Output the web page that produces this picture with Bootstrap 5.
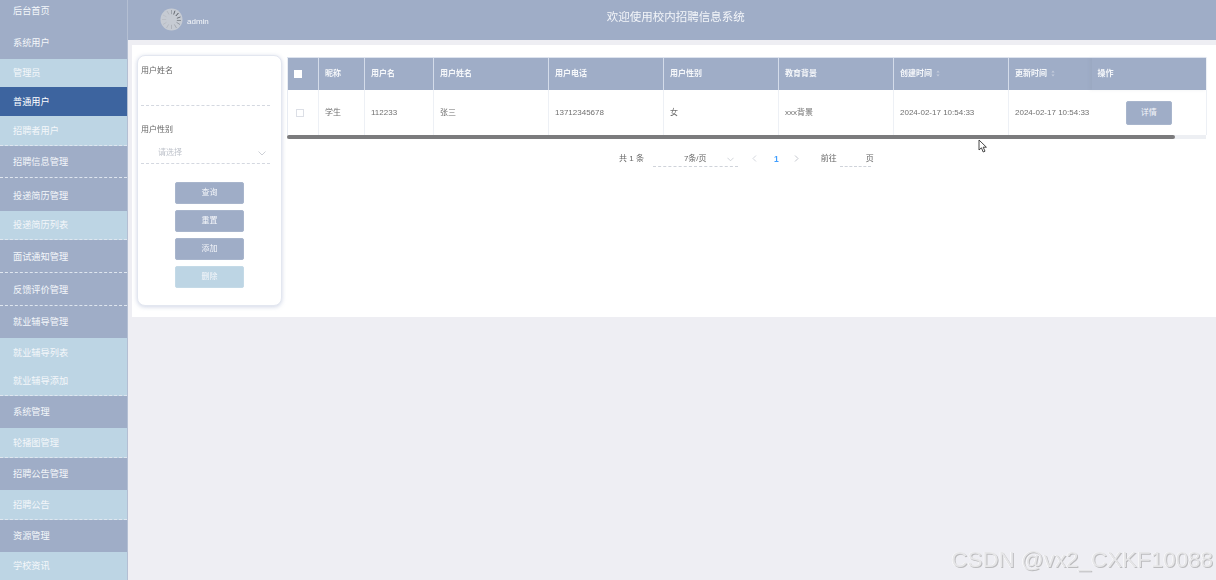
<!DOCTYPE html>
<html lang="zh">
<head>
<meta charset="utf-8">
<title>校内招聘信息系统</title>
<link href="https://cdn.jsdelivr.net/npm/bootstrap@5.3.0/dist/css/bootstrap.min.css" rel="stylesheet">
<style>
html,body{height:580px;overflow:hidden}
body{background:#eeeef3;font-family:"Liberation Sans","Noto Sans CJK SC",sans-serif;color:#666;font-size:8px;position:relative}
.shell{height:580px;filter:blur(.4px)}
.side{width:128px;flex:none;background:#bdd5e4;border-right:1px solid #b4bfd3;overflow:hidden}
.side .nav-link{color:#f4f7fa;font-size:9.2px;padding:2px 0 0 13px;display:flex;align-items:center;line-height:1}
.i-main{background:#9fadc7}
.i-sub{background:#bdd5e4}
.side .nav-link.i-on{background:#3d649f;color:#fff}
.dash{border-bottom:1px dashed #dfe6ef}
.h27{height:27px;padding-bottom:5px!important}.h28{height:28px}.h29{height:29px}.h30{height:30px}.h32{height:32px}.h33{height:33px}
.side .nav-link.h33{padding-top:4px}
.top{height:40px;background:#9fadc7;color:#fff;padding-left:32px}
.who{font-size:8px;margin-left:4px;color:#f5f7fa;margin-top:3px}
.ttl{font-size:11.5px;margin-left:398px;margin-top:-5px;color:#f3f5f9}
.avatar{width:23px;height:23px;margin-top:-1px}
.panel{height:272px;background:#fff;margin:5px 0 0 4px;padding:10px 10px 0 5px;gap:5px}
.fcard{width:145px;height:251px;flex:none;border:1px solid #e3e7f0;border-radius:8px;box-shadow:0 1px 4px rgba(150,165,200,.45);padding:9px 3px 0;background:#fff}
.flabel{font-size:8px;color:#666;line-height:11px}
.fline{border-bottom:1px dashed #d4d8e0;font-size:8px;color:#bfc3cb;padding-left:17px}
.fline1{height:24px;margin:6px 8px 18px 0}
.fline2{height:21px;margin:8px 8px 18px 0}
.actbtn{width:69px;height:22px;border-radius:2px;border:1px solid #a8b5cc;background:#9fadc7;color:#f4f6fa;font-size:8px;padding:0;line-height:1}
.actbtn.pale{background:#bdd5e4;border-color:#c4dae7}
.btnstack{gap:6px}
.tblwrap{width:919px;margin-top:2px}
.gtable{table-layout:fixed;width:919px;margin:0;font-size:8px;--bs-table-bg:transparent;border-collapse:collapse}
.gtable th{height:32px;background:#9fadc7;color:#f5f7fa;font-weight:700;font-size:8px;padding:0 6px;border:0;border-left:1px solid #d4dcea;vertical-align:middle;white-space:nowrap;border-top:1px solid #dde3ee}
.gtable td{height:45px;padding:2px 6px 0;border:0;border-left:1px solid #edf0f5;color:#707070;vertical-align:middle;white-space:nowrap;overflow:hidden}
.gtable th:first-child{padding:0 0 0 6px;border-left:1px solid #e8ecf3}
.gtable td:first-child{padding:2px 0 0 8px;border-left:1px solid #e8ecf3}
.gtable .fixc{box-shadow:-2px 0 3px rgba(120,130,150,.12);border-left:0;border-right:1px solid #edf0f5;padding-left:6px}
.gtable td.fixc{text-align:center}
.chk{width:8px;height:8px;display:block;border:1px solid #dcdfe6;background:#fff}
th .chk{border:0}
.sorter{display:inline-block;width:4px;height:7px;margin-left:4px;vertical-align:-1px}
.detbtn{width:46px;height:24px;font-size:8px;background:#9fadc7;border:1px solid #a8b5cc;border-radius:2px;color:#f4f6fa;padding:0}
.track{height:4px;background:#edeff3}
.thumb{width:888px;height:4px;background:#7b7b7d;border-radius:2px}
.pager{margin-top:14px;height:12px;font-size:8px;color:#666;padding-left:332px}
.psel{width:85px;height:14px;margin-left:9px;border-bottom:1px dashed #cfd3da;padding-left:31px;padding-right:4px;position:relative}
.parrow{margin-left:14px;margin-top:2px}
.pnum{color:#409eff;font-weight:700;margin:0 15px 0 17px;font-size:8.5px}
.pgo{width:31px;height:14px;border-bottom:1px dashed #cfd3da;margin:0 -5px 0 3px}
.pnext{margin-right:22px;margin-top:2px}
.mark2{position:absolute;right:3px;bottom:9px;font-family:"Liberation Sans",sans-serif;font-size:22.4px;color:#e6e6e8;line-height:1;text-shadow:1px 1px 0 #bcbcbe,-.5px -.5px 0 #fff}
.cursor{position:absolute;left:978px;top:139px;width:10px;height:14px}
</style>
</head>
<body>
<div class="shell d-flex">
  <nav class="side nav flex-column flex-nowrap">
    <a class="nav-link i-main h27" href="#">后台首页</a>
    <a class="nav-link i-main h32" href="#">系统用户</a>
    <a class="nav-link i-sub h28" href="#">管理员</a>
    <a class="nav-link i-on h29" href="#">普通用户</a>
    <a class="nav-link i-sub h30 dash" href="#">招聘者用户</a>
    <a class="nav-link i-main h32 dash" href="#">招聘信息管理</a>
    <a class="nav-link i-main h33" href="#">投递简历管理</a>
    <a class="nav-link i-sub h29 dash" href="#">投递简历列表</a>
    <a class="nav-link i-main h33 dash" href="#">面试通知管理</a>
    <a class="nav-link i-main h33 dash" href="#">反馈评价管理</a>
    <a class="nav-link i-main h32" href="#">就业辅导管理</a>
    <a class="nav-link i-sub h29" href="#">就业辅导列表</a>
    <a class="nav-link i-sub h29 dash" href="#">就业辅导添加</a>
    <a class="nav-link i-main h32" href="#">系统管理</a>
    <a class="nav-link i-sub h30 dash" href="#">轮播图管理</a>
    <a class="nav-link i-main h32" href="#">招聘公告管理</a>
    <a class="nav-link i-sub h30 dash" href="#">招聘公告</a>
    <a class="nav-link i-main h32" href="#">资源管理</a>
    <a class="nav-link i-sub h28" href="#">学校资讯</a>
  </nav>
  <main class="flex-grow-1">
    <header class="top d-flex align-items-center">
      <svg class="avatar" viewBox="0 0 24 24" aria-hidden="true">
        <circle cx="12" cy="12" r="11.5" fill="#c6cbd3"/>
        <g stroke-width="1" stroke-linecap="round">
          <path d="M12 2.5V6" stroke="#9ba1aa"/>
          <path d="M15.5 3.2L14.4 6.4" stroke="#5f646c"/>
          <path d="M19 5.5L16.8 8" stroke="#4b5058"/>
          <path d="M21 9.5L18 10.6" stroke="#6a6f77"/>
          <path d="M21.5 13H18" stroke="#858a92"/>
          <path d="M20.5 17L17.6 15.2" stroke="#9298a0"/>
          <path d="M17 20.5L15.2 17.5" stroke="#a2a7af"/>
          <path d="M12 21.5V18" stroke="#adb2b9"/>
          <path d="M7 20.5L8.8 17.5" stroke="#b4b8bf"/>
          <path d="M3.5 17L6.4 15.2" stroke="#b8bcc3"/>
          <path d="M2.5 12H6" stroke="#babec5"/>
          <path d="M3.5 7.5L6.4 9" stroke="#bcc0c7"/>
          <path d="M7.5 3.5L9.2 6.4" stroke="#b4b8bf"/>
        </g>
      </svg>
      <span class="who">admin</span>
      <span class="ttl">欢迎使用校内招聘信息系统</span>
    </header>
    <section class="panel d-flex align-items-start">
      <form class="fcard">
        <div class="flabel">用户姓名</div>
        <div class="fline fline1"></div>
        <div class="flabel">用户性别</div>
        <div class="fline fline2 d-flex justify-content-between align-items-center">
          <span>请选择</span>
          <svg width="8" height="5" viewBox="0 0 8 5" class="me-1" aria-hidden="true"><path d="M.5.5L4 4 7.5.5" fill="none" stroke="#c0c4cc" stroke-width=".8"/></svg>
        </div>
        <div class="d-flex flex-column align-items-center btnstack">
          <button type="button" class="btn actbtn">查询</button>
          <button type="button" class="btn actbtn">重置</button>
          <button type="button" class="btn actbtn">添加</button>
          <button type="button" class="btn actbtn pale">删除</button>
        </div>
      </form>
      <div class="flex-grow-1">
        <div class="tblwrap">
          <table class="table gtable">
            <colgroup>
              <col style="width:31px"><col style="width:46px"><col style="width:69px"><col style="width:115px"><col style="width:115px"><col style="width:115px"><col style="width:115px"><col style="width:115px"><col style="width:83px"><col style="width:115px">
            </colgroup>
            <thead>
              <tr>
                <th><span class="chk"></span></th><th>昵称</th><th>用户名</th><th>用户姓名</th><th>用户电话</th><th>用户性别</th><th>教育背景</th>
                <th>创建时间<svg class="sorter" viewBox="0 0 4 7" aria-hidden="true"><path d="M2 .5L3.6 2.6H.4zM2 6.5L.4 4.4h3.2z" fill="#c4ccdc"/></svg></th>
                <th>更新时间<svg class="sorter" viewBox="0 0 4 7" aria-hidden="true"><path d="M2 .5L3.6 2.6H.4zM2 6.5L.4 4.4h3.2z" fill="#c4ccdc"/></svg></th>
                <th class="fixc">操作</th>
              </tr>
            </thead>
            <tbody>
              <tr>
                <td><span class="chk"></span></td><td>学生</td><td>112233</td><td>张三</td><td>13712345678</td><td>女</td><td>xxx背景</td><td>2024-02-17 10:54:33</td><td>2024-02-17 10:54:33</td>
                <td class="fixc"><button type="button" class="btn detbtn">详情</button></td>
              </tr>
            </tbody>
          </table>
          <div class="track"><div class="thumb"></div></div>
          <div class="pager d-flex align-items-start">
            <span>共 1 条</span>
            <div class="psel d-flex justify-content-between align-items-start"><span>7条/页</span>
              <svg width="7" height="5" viewBox="0 0 8 5" class="mt-1" aria-hidden="true"><path d="M.5.5L4 4 7.5.5" fill="none" stroke="#c0c4cc" stroke-width=".8"/></svg>
            </div>
            <svg width="5" height="7" viewBox="0 0 5 7" class="parrow" aria-hidden="true"><path d="M4 .5L1 3.5 4 6.5" fill="none" stroke="#c8ccd4" stroke-width=".8"/></svg>
            <span class="pnum">1</span>
            <svg width="5" height="7" viewBox="0 0 5 7" class="pnext" aria-hidden="true"><path d="M1 .5L4 3.5 1 6.5" fill="none" stroke="#b4b8c0" stroke-width=".8"/></svg>
            <span>前往</span>
            <div class="pgo"></div>
            <span>页</span>
          </div>
        </div>
      </div>
    </section>
  </main>
</div>
<svg class="cursor" viewBox="0 0 10 14" aria-hidden="true"><path d="M1 1V11L3.4 8.8 5.2 13 7 12.2 5.2 8.2H8.4z" fill="#fff" stroke="#333" stroke-width=".9"/></svg>
<div class="mark2">CSDN @vx2_CXKF10088</div>
<script src="https://cdn.jsdelivr.net/npm/bootstrap@5.3.0/dist/js/bootstrap.bundle.min.js"></script>
</body>
</html>
